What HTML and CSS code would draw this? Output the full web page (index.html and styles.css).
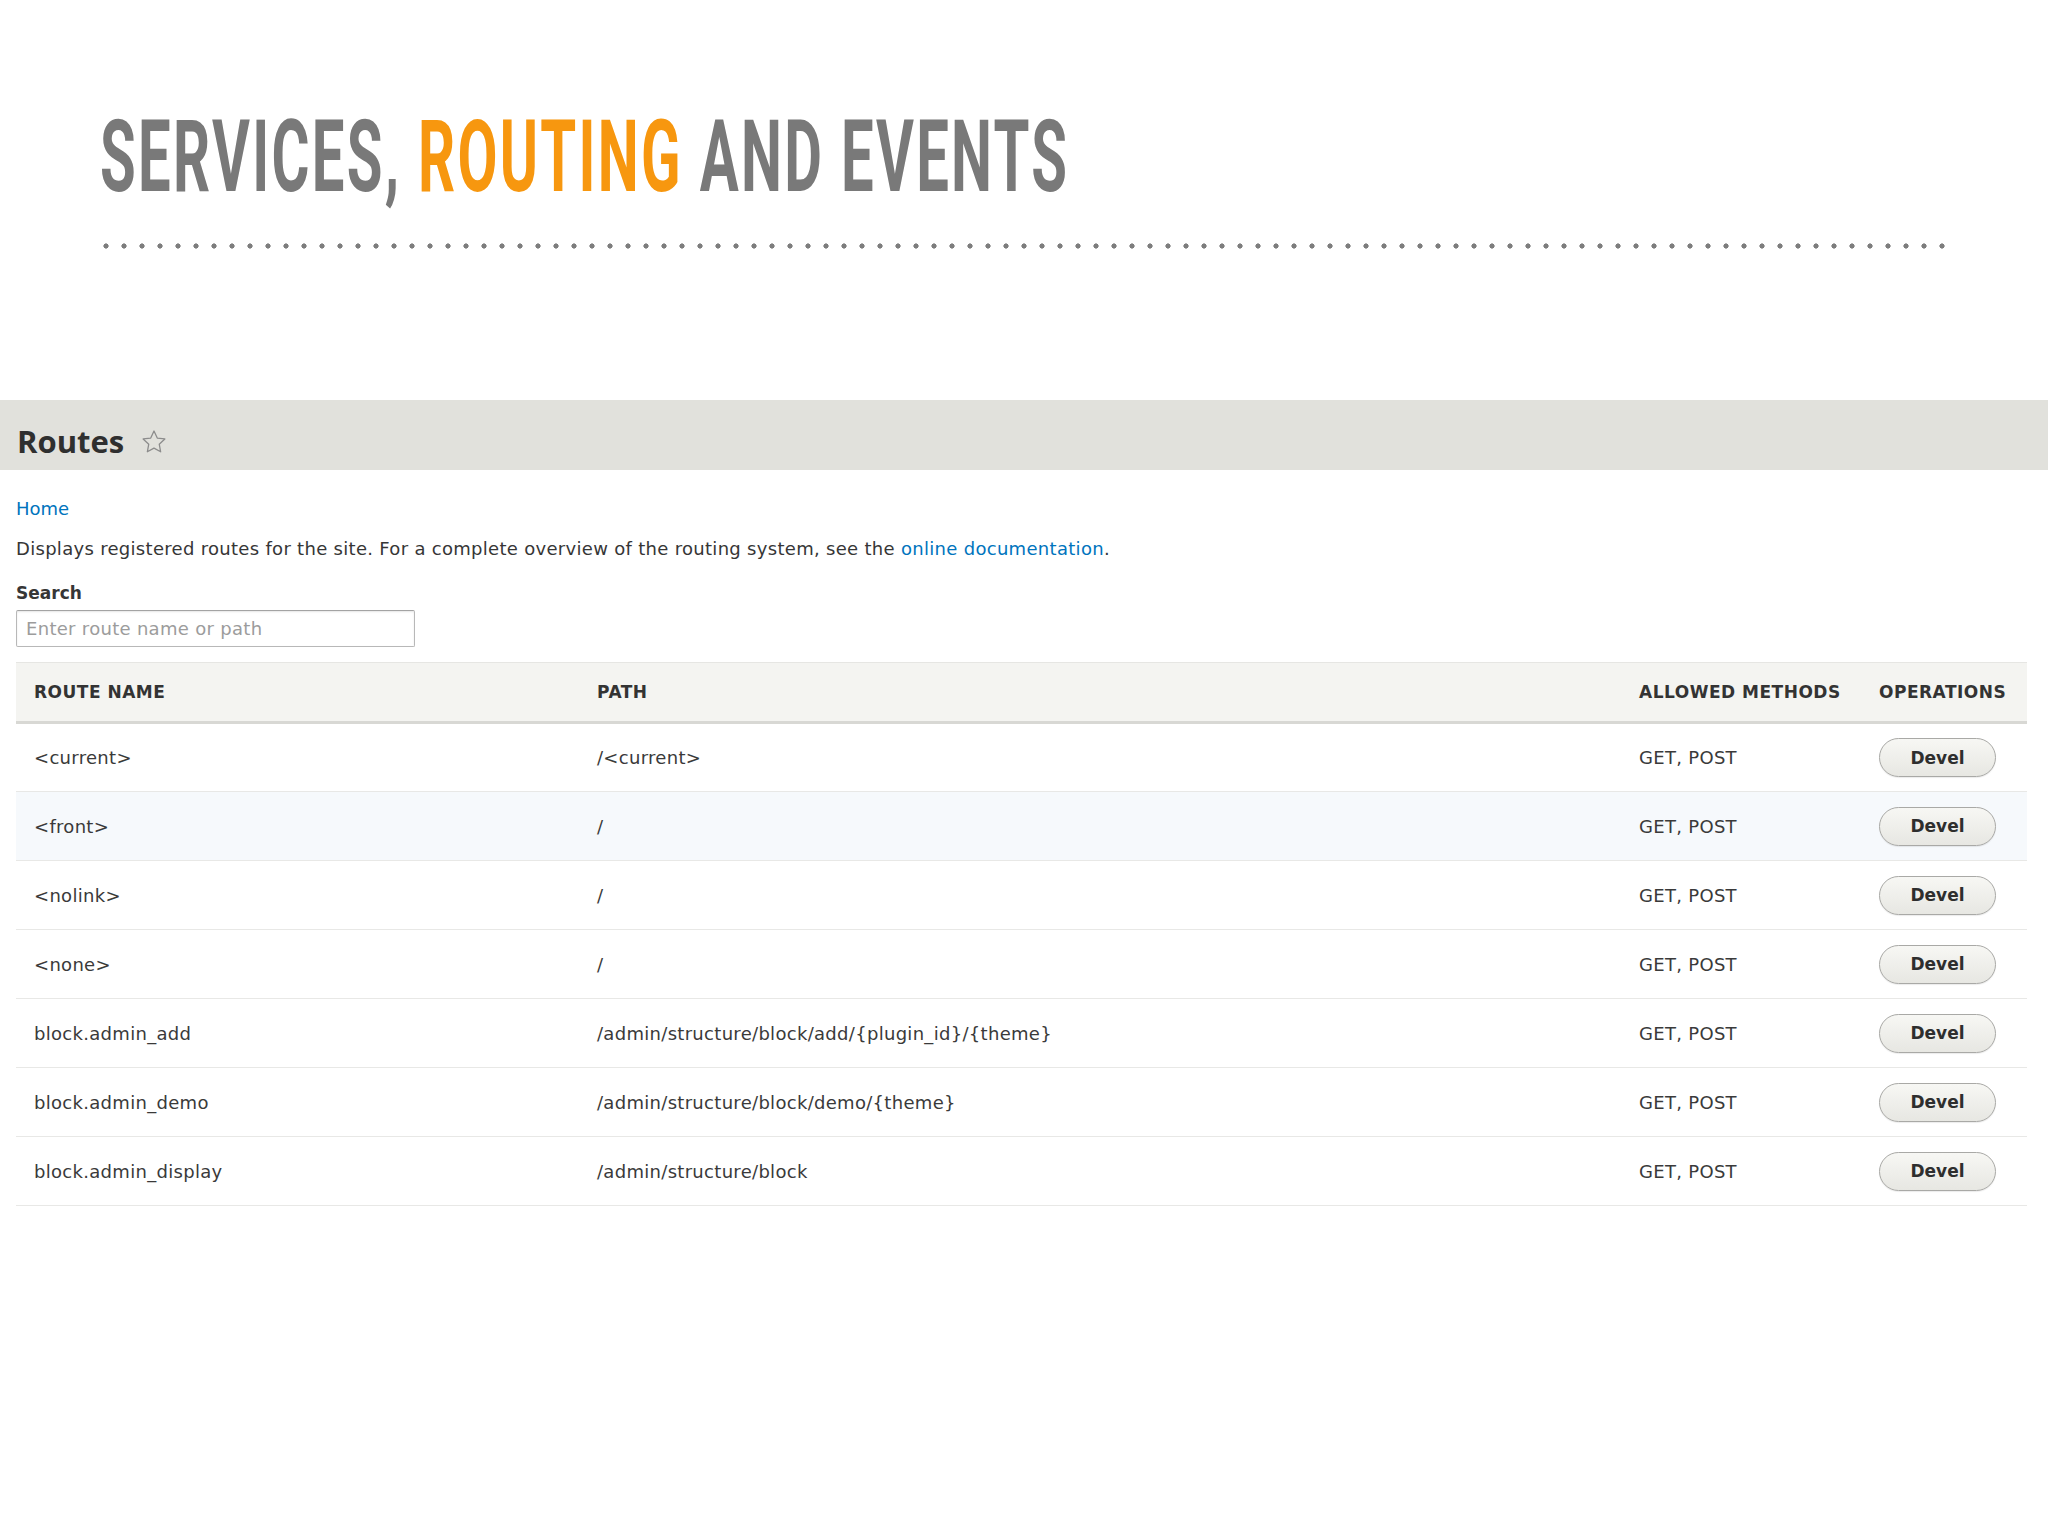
FILE: index.html
```html
<!DOCTYPE html>
<html>
<head>
<meta name="viewport" content="width=device-width, initial-scale=1">
<link rel="stylesheet" href="styles.css">
</head>
<body>

<header class="slide-head">
  <h1 class="slide-title">SERVICES, <span class="accent">ROUTING</span> AND EVENTS</h1>
  <div class="dots"></div>
</header>

<section class="admin">
  <div class="band">
    <h2 class="page-title">Routes
      <svg class="star" width="28" height="28" viewBox="0 0 24 24"><path d="M12 2.6l2.8 6 6.5.8-4.8 4.5 1.2 6.5L12 17.2l-5.7 3.2 1.2-6.5-4.8-4.5 6.5-.8z" fill="none" stroke="#8c8c8c" stroke-width="1.1" stroke-linejoin="round"/></svg>
    </h2>
  </div>

  <div class="content">
    <a class="crumb" href="#">Home</a>
    <p class="intro">Displays registered routes for the site. For a complete overview of the routing system, see the <a href="#">online documentation</a>.</p>

    <label class="search-label" for="q">Search</label>
    <input class="search" id="q" type="text" placeholder="Enter route name or path">

    <table class="routes">
      <colgroup>
        <col class="c-name"><col class="c-path"><col class="c-methods"><col class="c-ops">
      </colgroup>
      <thead>
        <tr><th>Route name</th><th>Path</th><th>Allowed methods</th><th>Operations</th></tr>
      </thead>
      <tbody>
        <tr><td>&lt;current&gt;</td><td>/&lt;current&gt;</td><td>GET, POST</td><td><button class="devel">Devel</button></td></tr>
        <tr class="hover"><td>&lt;front&gt;</td><td>/</td><td>GET, POST</td><td><button class="devel">Devel</button></td></tr>
        <tr><td>&lt;nolink&gt;</td><td>/</td><td>GET, POST</td><td><button class="devel">Devel</button></td></tr>
        <tr><td>&lt;none&gt;</td><td>/</td><td>GET, POST</td><td><button class="devel">Devel</button></td></tr>
        <tr><td>block.admin_add</td><td>/admin/structure/block/add/{plugin_id}/{theme}</td><td>GET, POST</td><td><button class="devel">Devel</button></td></tr>
        <tr><td>block.admin_demo</td><td>/admin/structure/block/demo/{theme}</td><td>GET, POST</td><td><button class="devel">Devel</button></td></tr>
        <tr><td>block.admin_display</td><td>/admin/structure/block</td><td>GET, POST</td><td><button class="devel">Devel</button></td></tr>
      </tbody>
    </table>
  </div>
</section>

</body>
</html>
```

FILE: styles.css
```css
* {box-sizing: border-box}

body, html {
  margin: 0;
  background: #fff;
}

/* slide heading */
.slide-head {
  padding: 107px 0 0 100px;
}

.slide-title {
  display: inline-block;
  margin: 0;
  font-family: Roboto, "Liberation Sans", sans-serif;
  font-weight: 700;
  font-size: 100px;
  line-height: 100px;
  letter-spacing: 4px;
  color: #797979;
  white-space: nowrap;
  transform: scaleX(0.58);
  transform-origin: 0 0;
}

.accent {
  color: #f7970f;
}

.dots {
  margin: 36px 0 0 -3px;
  width: 1854px;
  height: 6px;
  background-image: radial-gradient(circle, #7d7d7d 2.3px, transparent 2.9px);
  background-size: 18px 6px;
}

/* admin screenshot */
.admin {
  margin-top: 151px;
  font-family: "DejaVu Sans", "Open Sans", sans-serif;
  color: #363636;
}

.band {
  height: 70px;
  padding: 26px 17px 0;
  background: #e1e1dc;
}

.page-title {
  display: flex;
  align-items: center;
  gap: 16px;
  margin: 0;
  font-family: "Open Sans", sans-serif;
  font-size: 31px;
  line-height: 31px;
  font-weight: 700;
  color: #2f2f2f;
}

.content {
  padding: 0 21px 0 16px;
}

a {
  color: #0074bd;
  text-decoration: none;
}

.crumb {
  display: block;
  margin-top: 27px;
  font-size: 18px;
  line-height: 24px;
}

.intro {
  margin: 15px 0 0;
  font-size: 18px;
  line-height: 26px;
  letter-spacing: 0.3px;
}

.search-label {
  display: block;
  margin-top: 19px;
  font-size: 17px;
  line-height: 24px;
  font-weight: 700;
}

.search {
  display: block;
  margin-top: 5px;
  width: 399px;
  height: 37px;
  padding: 0 9px;
  border: 1px solid #b8b8b8;
  border-top-color: #a3a3a3;
  border-radius: 2px;
  box-shadow: inset 0 1px 2px rgba(0,0,0,0.1);
  font-family: inherit;
  font-size: 18px;
  letter-spacing: 0.3px;
}

.search::placeholder {
  color: #9c9c9c;
}

/* table */
.routes {
  margin-top: 15px;
  width: 2011px;
  border-collapse: collapse;
  table-layout: fixed;
}

.c-name {width: 563px}
.c-path {width: 1042px}
.c-methods {width: 240px}
.c-ops {width: 166px}

.routes th {
  height: 60px;
  padding: 0 18px;
  text-align: left;
  text-transform: uppercase;
  font-size: 17px;
  letter-spacing: 0.5px;
  font-weight: 700;
  color: #333;
  white-space: nowrap;
  background: #f4f4f1;
  border-top: 1px solid #e6e6e3;
  border-bottom: 3px solid #d8d8d4;
}

.routes td {
  height: 69px;
  padding: 0 18px;
  font-size: 18px;
  letter-spacing: 0.3px;
  color: #3a3a3a;
  border-bottom: 1px solid #e8e8e6;
  white-space: nowrap;
}

.routes tr.hover td {
  background: #f6f9fc;
}

.devel {
  width: 117px;
  height: 39px;
  padding: 0;
  border: 1px solid #a9a9a6;
  border-radius: 20px;
  background: linear-gradient(#f7f7f4, #e7e7e2);
  box-shadow: 0 1px 1px rgba(0,0,0,0.08);
  font-family: inherit;
  font-size: 17px;
  letter-spacing: 0;
  font-weight: 700;
  color: #2e2e2e;
}
```
